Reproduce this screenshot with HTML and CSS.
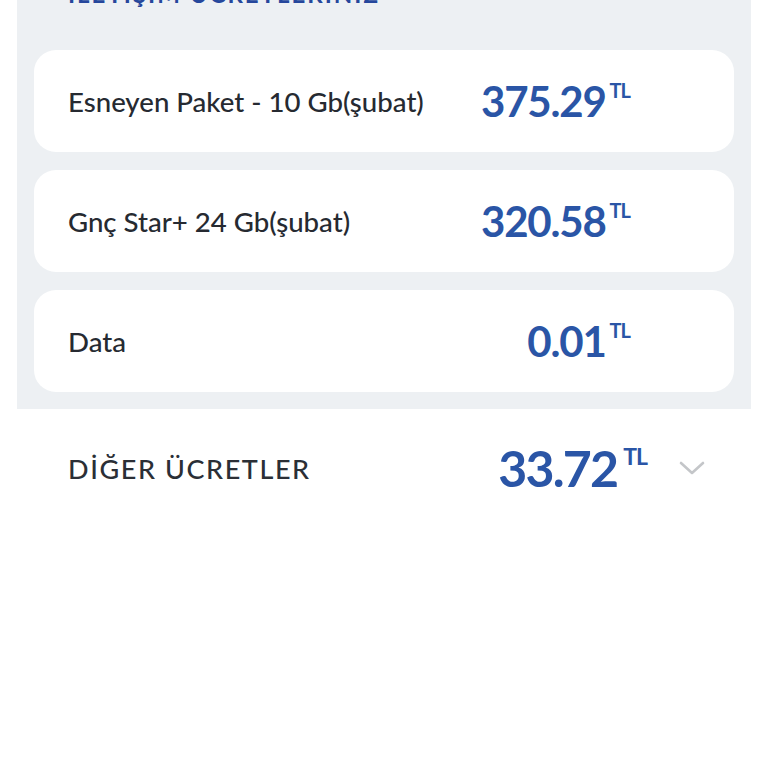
FILE: index.html
```html
<!DOCTYPE html>
<html lang="tr">
<head>
  <meta charset="UTF-8">
  <title>Fatura Detayı</title>
  <link rel="stylesheet" href="styles.css">
</head>
<body>
  <section class="panel">
    <div class="panel-title">İLETİŞİM ÜCRETLERİNİZ</div>

    <div class="item">
      <div class="item-name">Esneyen Paket - 10 Gb(şubat)</div>
      <div class="price"><span class="amount">375.29</span><span class="cur">TL</span></div>
    </div>
    <div class="item">
      <div class="item-name">Gnç Star+ 24 Gb(şubat)</div>
      <div class="price"><span class="amount">320.58</span><span class="cur">TL</span></div>
    </div>
    <div class="item">
      <div class="item-name">Data</div>
      <div class="price"><span class="amount">0.01</span><span class="cur">TL</span></div>
    </div>
  </section>

  <div class="other">
    <div class="other-name">DİĞER ÜCRETLER</div>
    <div class="price big"><span class="amount">33.72</span><span class="cur">TL</span></div>
    <svg class="chevron" width="26" height="16" viewBox="0 0 26 16">
      <path d="M2 3 L13 13 L24 3" fill="none" stroke="#c4c6c9" stroke-width="2.6" stroke-linecap="round" stroke-linejoin="round"/>
    </svg>
  </div>
</body>
</html>
```

FILE: styles.css
```css
* { box-sizing: border-box; }

body {
  margin: 0;
  background: #fff;
  font-family: Lato, "Noto Sans", sans-serif;
  color: #2b2f36;
  overflow: hidden;
}

.panel {
  margin: 0 17px;
  padding: 0 17px 17px;
  background: #edf0f3;
}

.panel-title {
  margin-top: -18px;
  height: 68px;
  padding-left: 34px;
  font-size: 24px;
  line-height: 24px;
  font-weight: 700;
  letter-spacing: 2px;
  color: #26479c;
}

.item {
  display: flex;
  align-items: center;
  height: 102px;
  margin-bottom: 18px;
  padding: 0 104px 0 34px;
  background: #fff;
  border-radius: 22px;
}

.item:last-child { margin-bottom: 0; }

.item-name {
  flex: 1;
  font-size: 27.6px;
  font-weight: 500;
  color: #262a31;
}

.price {
  display: flex;
  align-items: flex-start;
  color: #2a55a6;
  font-weight: 700;
}

.amount {
  font-size: 42px;
  line-height: 42px;
  letter-spacing: -1.2px;
}

.cur {
  font-size: 20px;
  line-height: 20px;
  margin-left: 4px;
  letter-spacing: -1px;
}

.other {
  display: flex;
  align-items: center;
  padding: 34px 63px 0 68px;
}

.other-name {
  flex: 1;
  font-size: 27px;
  font-weight: 500;
  letter-spacing: 1.6px;
}

.price.big .amount {
  font-size: 50px;
  line-height: 50px;
  letter-spacing: -1.8px;
}

.price.big .cur {
  font-size: 23px;
  line-height: 23px;
  margin-left: 6px;
  margin-top: 2px;
}

.chevron {
  margin-left: 32px;
  margin-top: 0;
}
```
